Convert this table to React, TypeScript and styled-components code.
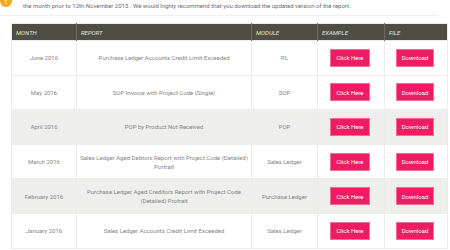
import React from 'react'
import styled, { createGlobalStyle } from 'styled-components'

interface Report {
    month: string,
    report: string[],
    module: string,
    shaded: boolean
}

const reports: Report[] = [
    { month: 'June 2016', report: ['Purchase Ledger Accounts Credit Limit Exceeded'], module: 'PL', shaded: false },
    { month: 'May 2016', report: ['SOP Invoice with Project Code (Single)'], module: 'SOP', shaded: false },
    { month: 'April 2016', report: ['POP by Product Not Received'], module: 'POP', shaded: true },
    { month: 'March 2016', report: ['Sales Ledger Aged Debtors Report with Project Code (Detailed)', 'Portrait'], module: 'Sales Ledger', shaded: false },
    { month: 'February 2016', report: ['Purchase Ledger Aged Creditors Report with Project Code', '(Detailed) Protrait'], module: 'Purchase Ledger', shaded: true },
    { month: 'January 2016', report: ['Sales Ledger Accounts Credit Limit Exceeded'], module: 'Sales Ledger', shaded: false }
]

const App: React.FC = () => {
    return (
        <React.Fragment>
            <GlobalStyle />
            <Wrapper>
                <Notice>
                    <Alert>!</Alert>
                    <p>
                        Please note that a number of the reports below were updated. If you downloaded any of these reports in<br />
                        the month prior to 12th November 2015 . We would highly recommend that you download the updated version of the report.
                    </p>
                </Notice>
                <Divider />
                <Table>
                    <colgroup>
                        <col style={{ width: 65 }} />
                        <col style={{ width: 175 }} />
                        <col style={{ width: 66 }} />
                        <col style={{ width: 67 }} />
                        <col style={{ width: 63 }} />
                    </colgroup>
                    <thead>
                        <tr>
                            <HeadCell>Month</HeadCell>
                            <HeadCell>Report</HeadCell>
                            <HeadCell>Module</HeadCell>
                            <HeadCell>Example</HeadCell>
                            <HeadCell>File</HeadCell>
                        </tr>
                    </thead>
                    <tbody>
                        {reports.map(r => (
                            <Row key={r.month} $shaded={r.shaded}>
                                <Cell>{r.month}</Cell>
                                <Cell>
                                    {r.report.map((line, j) => (
                                        <React.Fragment key={line}>
                                            {j > 0 && <br />}
                                            {line}
                                        </React.Fragment>
                                    ))}
                                </Cell>
                                <Cell>{r.module}</Cell>
                                <Cell><Button>Click Here</Button></Cell>
                                <Cell><Button>Download</Button></Cell>
                            </Row>
                        ))}
                    </tbody>
                </Table>
            </Wrapper>
        </React.Fragment>
    )
}

const GlobalStyle = createGlobalStyle`
    body {
        margin: 0;
        background: #fff;
        font-family: Roboto, "Liberation Sans", sans-serif;
        overflow: hidden;
    }
`

const Wrapper = styled.section`
    display: flex;
    flex-direction: column;
    width: 450px;
    height: 250px;
    overflow: hidden;
`

const Notice = styled.div`
    display: flex;
    align-items: flex-start;
    margin-top: -8px;

    p {
        margin: 0 0 0 11px;
        font-size: 6px;
        line-height: 9px;
        color: #6a6a6a;
        white-space: nowrap;
    }
`

const Alert = styled.span`
    display: flex;
    align-items: center;
    justify-content: center;
    flex: none;
    width: 12px;
    height: 12px;
    margin-top: 3px;
    border-radius: 50%;
    background: #f5a623;
    color: #fff;
    font-size: 9px;
    font-weight: bold;
`

const Divider = styled.div`
    height: 1px;
    margin: 5px 12px 0 0;
    background: #efefef;
`

const Table = styled.table`
    width: 436px;
    margin: 7px 0 0 11px;
    border-collapse: collapse;
    table-layout: fixed;
    border: 1px solid #ececec;
`

const HeadCell = styled.th`
    height: 16px;
    padding: 0 0 0 4px;
    background: #4f4e45;
    border-left: 1px solid #6c6b62;
    color: #e2e2de;
    font-size: 6px;
    font-style: italic;
    font-weight: normal;
    text-transform: uppercase;
    text-align: left;

    &:first-child {
        border-left: none;
    }
`

const Row = styled.tr<{ $shaded: boolean }>`
    background: ${props => props.$shaded ? '#eeeeec' : '#fff'};
`

const Cell = styled.td`
    height: 33.6px;
    padding: 0 3px;
    border-left: 1px solid #ececec;
    border-top: 1px solid #ececec;
    color: #858585;
    font-size: 6px;
    line-height: 9px;
    text-align: center;
`

const Button = styled.span`
    display: inline-flex;
    align-items: center;
    justify-content: center;
    height: 16px;
    padding: 0 5px;
    margin-right: 2px;
    background: #ef1c63;
    border: 1px solid #f56d96;
    color: #fff;
    font-size: 6px;
`

export default App
